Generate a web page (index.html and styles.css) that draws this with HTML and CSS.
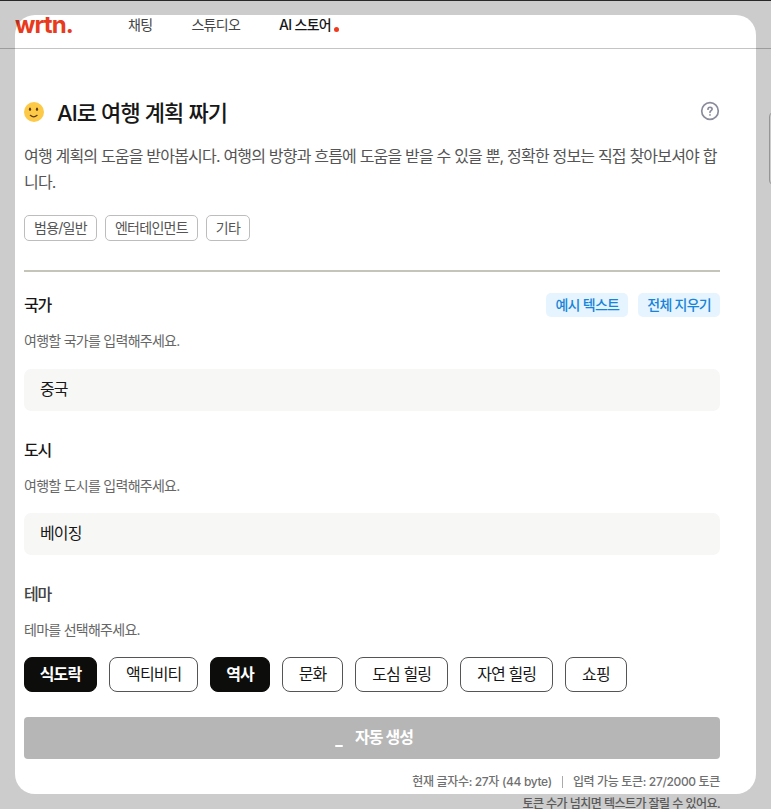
FILE: index.html
```html
<!DOCTYPE html>
<html lang="ko">
<head>
    <meta charset="UTF-8">
    <meta name="viewport" content="width=device-width, initial-scale=1.0">
    <title>AI로 여행 계획 짜기</title>
    <link rel="stylesheet" href="styles.css">
</head>
<body>
    <header class="header">
        <a class="logo">wrtn.</a>
        <nav class="nav">
            <a class="nav-chat">채팅</a>
            <a class="nav-studio">스튜디오</a>
            <a class="nav-store active">AI 스토어<span class="dot"></span></a>
        </nav>
    </header>

    <main class="content">
        <div class="title-row">
            <svg class="emoji" width="20" height="20" viewBox="0 0 20 20">
                <circle cx="10" cy="10" r="10" fill="#fdca47"/>
                <ellipse cx="6" cy="7.3" rx="1.1" ry="1.7" fill="#5d3a1a"/>
                <ellipse cx="13" cy="7.3" rx="1.1" ry="1.7" fill="#5d3a1a"/>
                <path d="M6.3 13.3Q9.7 16.3 13.1 13.3" fill="none" stroke="#5d3a1a" stroke-width="1.2" stroke-linecap="round"/>
            </svg>
            <h1 class="title">AI로 여행 계획 짜기</h1>
            <svg class="help" width="20" height="20" viewBox="0 0 20 20" fill="none" stroke="#8b8c9b" stroke-width="1.7" stroke-linecap="round">
                <circle cx="10" cy="10" r="8.3"/>
                <path d="M8 8.2C8 5.5 12.2 5.7 12.1 8.2C12 9.7 10 9.7 10 11.3"/>
                <path d="M10 13.8V13.9"/>
            </svg>
        </div>
        <p class="description">여행 계획의 도움을 받아봅시다. 여행의 방향과 흐름에 도움을 받을 수 있을 뿐, 정확한 정보는 직접 찾아보셔야 합니다.</p>
        <div class="tags">
            <span class="tag">범용/일반</span>
            <span class="tag">엔터테인먼트</span>
            <span class="tag">기타</span>
        </div>

        <section class="field first">
            <div class="label-row">
                <h2 class="label">국가</h2>
                <button class="small-button">예시 텍스트</button>
                <button class="small-button">전체 지우기</button>
            </div>
            <p class="hint">여행할 국가를 입력해주세요.</p>
            <div class="input">중국</div>
        </section>

        <section class="field">
            <h2 class="label">도시</h2>
            <p class="hint">여행할 도시를 입력해주세요.</p>
            <div class="input">베이징</div>
        </section>

        <section class="field theme">
            <h2 class="label">테마</h2>
            <p class="hint">테마를 선택해주세요.</p>
            <div class="chips">
                <button class="chip selected">식도락</button>
                <button class="chip">액티비티</button>
                <button class="chip selected">역사</button>
                <button class="chip">문화</button>
                <button class="chip">도심 힐링</button>
                <button class="chip">자연 힐링</button>
                <button class="chip">쇼핑</button>
            </div>
        </section>

        <button class="generate"><span class="loading"></span>자동 생성</button>
        <div class="count">
            <span>현재 글자수: 27자 (44 byte)</span>
            <span class="bar"></span>
            <span>입력 가능 토큰: 27/2000 토큰</span>
        </div>
        <p class="notice">토큰 수가 넘치면 텍스트가 잘릴 수 있어요.</p>
    </main>

    <div class="side-tab"></div>
    <div class="frame"></div>
</body>
</html>
```

FILE: styles.css
```css
* {
    box-sizing: border-box;
}

body {
    height: 809px;
    margin: 0;
    overflow: hidden;
    background: #fff;
    color: #171717;
    font-family: Inter, "Noto Sans CJK KR", sans-serif;
    letter-spacing: -0.056em;
}

h1, h2, p {
    margin: 0;
}

button {
    border: none;
    font-family: inherit;
    letter-spacing: inherit;
    white-space: nowrap;
    cursor: pointer;
}

/* Header */
.header {
    display: flex;
    align-items: center;
    height: 49px;
    padding-left: 15px;
    border-top: 1px solid #333;
    border-bottom: 1px solid #c4c4c4;
}

.logo {
    width: 113px;
    color: #e83a1c;
    font-size: 24px;
    font-weight: 700;
    line-height: 30px;
    letter-spacing: -0.9px;
}

.nav {
    display: flex;
    gap: 39px;
    color: #444;
    font-size: 14px;
    line-height: 20px;
    letter-spacing: -0.05em;
}

.nav .active {
    display: flex;
    color: #171717;
    font-weight: 500;
}

.dot {
    width: 5px;
    height: 5px;
    margin: 12px 0 0 3px;
    border-radius: 50%;
    background: #f03a1e;
}

/* Content */
.content {
    width: 720px;
    padding: 48px 0 0 24px;
}

.title-row {
    display: flex;
    align-items: flex-start;
    height: 32px;
}

.emoji {
    margin-top: 5px;
}

.help {
    margin-top: 4px;
}

.title {
    margin: 0 auto 0 13px;
    font-size: 22px;
    font-weight: 500;
    line-height: 32px;
}

.description {
    margin-top: 14px;
    color: #555;
    font-size: 16px;
    line-height: 26px;
    letter-spacing: -0.81px;
    word-break: normal;
}

.tags {
    display: flex;
    gap: 8px;
    height: 77px;
    padding-top: 20px;
    border-bottom: 2px solid #c4c4b9;
}

.tag {
    height: 26px;
    padding: 0 9px;
    border: 1px solid #bdbdbd;
    border-radius: 5px;
    color: #555;
    font-size: 14px;
    line-height: 24px;
    letter-spacing: -0.052em;
}

/* Fields */
.field {
    margin-top: 27px;
}

.first {
    margin-top: 21px;
}

.label-row {
    display: flex;
    gap: 10px;
    height: 24px;
}

.label {
    margin-right: auto;
    font-size: 16px;
    font-weight: 500;
    line-height: 24px;
    letter-spacing: -0.08em;
}

.theme .label {
    color: #444;
}

.small-button {
    height: 24px;
    padding: 0 9px;
    border-radius: 5px;
    background: #e6f4ff;
    color: #1684d8;
    font-size: 14px;
    font-weight: 500;
    line-height: 24px;
    letter-spacing: -0.052em;
}

.hint {
    margin: 14px 0 17px;
    color: #666;
    font-size: 14px;
    line-height: 20px;
    letter-spacing: -0.052em;
}

.first .hint {
    margin-bottom: 18px;
}

.input {
    height: 42px;
    padding: 0 16px;
    border-radius: 7px;
    background: #f7f7f6;
    font-size: 16px;
    line-height: 41px;
}

.chips {
    display: flex;
    gap: 12px;
}

.chip {
    height: 35px;
    padding: 0 16px;
    border: 1px solid #555;
    border-radius: 8px;
    background: #fff;
    color: #171717;
    font-size: 16px;
    line-height: 33px;
}

.selected {
    padding: 0 14.8px;
    border-color: #0d0e0b;
    background: #0d0e0b;
    color: #fff;
    font-weight: 700;
}

.generate {
    display: flex;
    justify-content: center;
    width: 100%;
    height: 42px;
    margin-top: 25px;
    padding: 0 0 0 4px;
    border-radius: 4px;
    background: #b6b6b6;
    color: #fff;
    font-size: 16px;
    font-weight: 700;
    line-height: 41px;
}

.loading {
    width: 8px;
    height: 2px;
    margin: 28px 12px 0 0;
    border-radius: 1px;
    background: #fff;
}

.count {
    display: flex;
    justify-content: flex-end;
    align-items: center;
    margin-top: 13px;
    color: #707070;
    font-size: 12px;
    font-weight: 500;
    line-height: 20px;
    letter-spacing: -0.029em;
}

.bar {
    width: 1px;
    height: 12px;
    margin: 0 10px;
    background: #aaa;
}

.notice {
    margin-top: 2px;
    color: #707070;
    font-size: 12px;
    font-weight: 500;
    line-height: 20px;
    letter-spacing: -0.045em;
    text-align: right;
}

/* Tab at the right edge, mostly off screen */
.side-tab {
    position: absolute;
    top: 111px;
    right: -10px;
    width: 12px;
    height: 75px;
    border: 1px solid #bbb;
    border-radius: 8px;
}

/* Dimmed frame around the rounded view */
.frame {
    position: absolute;
    top: 15px;
    left: 15px;
    width: 741px;
    height: 779px;
    border-radius: 20px;
    box-shadow: 0 0 0 40px rgba(0, 0, 0, 0.2);
    pointer-events: none;
}
```
